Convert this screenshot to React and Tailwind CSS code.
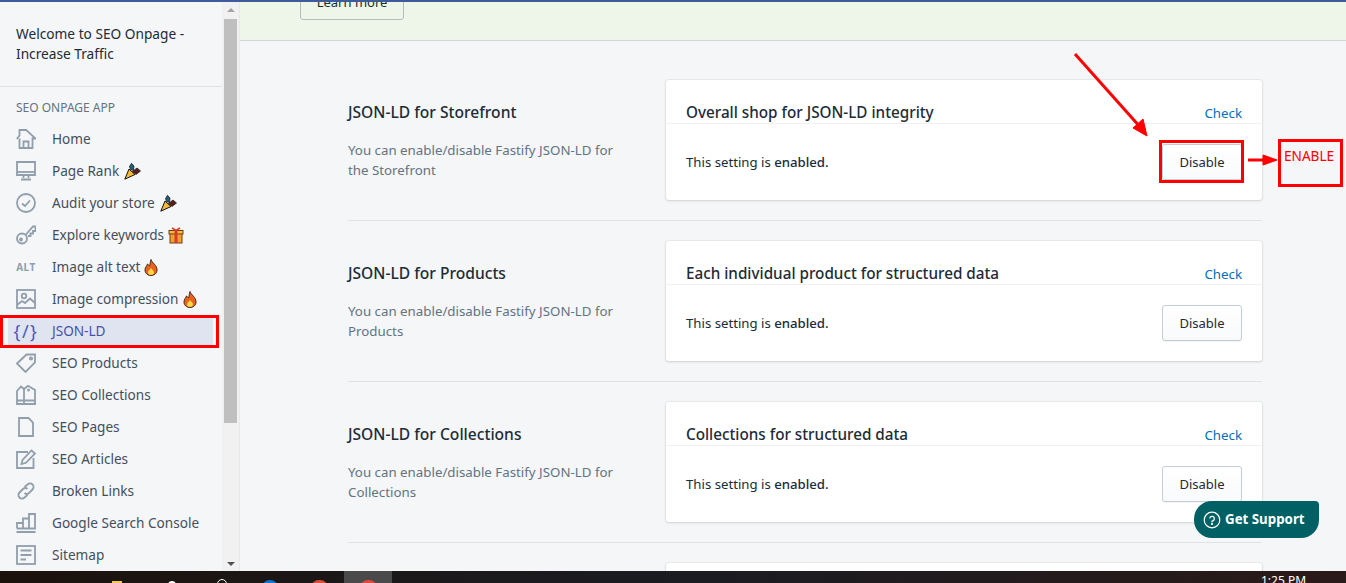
import React from 'react';

const Svg = ({ children }) => (
    <svg width="20" height="20" viewBox="0 0 20 20" fill="none" stroke="#919eab" strokeWidth="1.8" strokeLinejoin="miter">
        {children}
    </svg>
);

const icons = {
    home: <Svg><path d="M.8 10 L3.5 6.5 V1 H8 L10 .8 L19.5 9.5 L16.5 9.5 V19 H3.5 V9.5" /><path d="M7.5 19 V12.5 H12.5 V19" /></Svg>,
    rank: <Svg><path d="M1 1 H19 V14 H1 Z" /><path d="M1 11 H19" /><path d="M7.5 14 V17 M12.5 14 V17" /><path d="M5 18.5 H15" strokeWidth="2" /></Svg>,
    audit: <Svg><circle cx="10" cy="10" r="9" /><path d="M6 10.5 L9 13 L14 7.5" /></Svg>,
    key: <Svg><circle cx="6" cy="13.5" r="5" /><circle cx="5" cy="14.5" r="1" /><path d="M9.5 10 L17 1.5 H19.5 V6 H17 V8.5 H14.5 V11 H12" /></Svg>,
    image: <Svg><rect x="1" y="1" width="18" height="18" /><circle cx="8" cy="7" r="2.3" /><path d="M1 16 L6 12 L9 14 L14 9.5 L19 14" /></Svg>,
    tag: <Svg><path d="M1 10.5 L10.5 1.5 H19 V9.5 L9.5 19 Z" /><circle cx="15" cy="5.5" r="1.2" /></Svg>,
    collection: <Svg><path d="M1 19 V6 L5 1.5 L8 4 L12 .8 L19 5 V19 Z" /><path d="M1 15.5 H19 M8 4 V19" /><circle cx="12.5" cy="5" r=".6" /></Svg>,
    page: <Svg><path d="M3 1 H12.5 L17 5.5 V19 H3 Z" /></Svg>,
    article: <Svg><path d="M12 3 H1 V19 H17.5 V9" /><path d="M5.5 15 L6.5 11 L15.5 1.5 L19 4.5 L10 13.8 Z" /></Svg>,
    link: <Svg><path d="M8.5 6 L11.5 3.5 A3.4 3.4 0 0 1 16.5 8.5 L13 12 A3.4 3.4 0 0 1 8.5 12" /><path d="M11.5 14 L8.5 16.5 A3.4 3.4 0 0 1 3.5 11.5 L7 8 A3.4 3.4 0 0 1 11.5 8" /></Svg>,
    chart: <Svg><path d="M.5 19 H19.5" strokeWidth="2" /><path d="M1 15.5 V10 H7 V15.5 M7 15.5 V5.5 H13 V15.5 M13 15.5 V1 H19 V15.5 H1" /></Svg>,
    sitemap: <Svg><rect x="1" y="1" width="18" height="18" /><path d="M4.5 5.5 H15.5 M4.5 10 H15.5 M4.5 14.5 H10" /></Svg>,
};

const Popper = () => (
    <svg width="17" height="17" viewBox="0 0 17 17" className="ml-[5px] shrink-0">
        <path d="M.8 16.2 L5 6 L11 11.5 Z" fill="#f5b93a" stroke="#111" strokeWidth="1" />
        <path d="M5.5 3.5 L7.5 .3 L10 3 L9.5 7.5 L6.5 6.5 Z" fill="#1f5f7a" stroke="#111" strokeWidth=".7" />
        <path d="M8.5 8.5 L13 5 L16.5 8 L12 11.5 Z" fill="#5e1c18" stroke="#111" strokeWidth=".7" />
    </svg>
);

const Gift = () => (
    <svg width="16" height="17" viewBox="0 0 16 17" className="ml-1 shrink-0">
        <rect x="2" y="6" width="12" height="10" fill="#f0a030" stroke="#7a3a10" strokeWidth="1" />
        <rect x="1" y="3.5" width="14" height="3.5" fill="#f5b93a" stroke="#7a3a10" strokeWidth="1" />
        <rect x="6.5" y="3.5" width="3" height="12.5" fill="#d63b2a" />
        <path d="M8 3.5 L4 .8 M8 3.5 L12 .8" stroke="#d63b2a" strokeWidth="1.6" />
    </svg>
);

const Fire = () => (
    <svg width="14" height="17" viewBox="0 0 14 17" className="ml-1 shrink-0">
        <path d="M7 .5 C8 4 13 6 13 11 C13 14.5 10 16.5 7 16.5 C4 16.5 1 14.5 1 11 C1 8 3 7 3.5 5 C5 6 5.5 7 5.5 7 C6.5 5 6 3 7 .5 Z" fill="#e8641c" stroke="#3a1a08" strokeWidth=".9" />
        <path d="M7 9 C8 11 10 11.5 10 13.5 C10 15 8.5 16 7 16 C5.5 16 4 15 4 13.5 C4 11.5 6 11 7 9 Z" fill="#ffd84a" />
    </svg>
);

const navItems = [
    { label: 'Home', icon: icons.home },
    { label: 'Page Rank', icon: icons.rank, extra: <Popper /> },
    { label: 'Audit your store', icon: icons.audit, extra: <Popper /> },
    { label: 'Explore keywords', icon: icons.key, extra: <Gift /> },
    { label: 'Image alt text', alt: true, extra: <Fire /> },
    { label: 'Image compression', icon: icons.image, extra: <Fire /> },
    { label: 'JSON-LD', active: true },
    { label: 'SEO Products', icon: icons.tag },
    { label: 'SEO Collections', icon: icons.collection },
    { label: 'SEO Pages', icon: icons.page },
    { label: 'SEO Articles', icon: icons.article },
    { label: 'Broken Links', icon: icons.link },
    { label: 'Google Search Console', icon: icons.chart },
    { label: 'Sitemap', icon: icons.sitemap },
];

const sections = [
    { title: 'JSON-LD for Storefront', desc: 'the Storefront', card: 'Overall shop for JSON-LD integrity' },
    { title: 'JSON-LD for Products', desc: 'Products', card: 'Each individual product for structured data' },
    { title: 'JSON-LD for Collections', desc: 'Collections', card: 'Collections for structured data' },
];

const NavRow = ({ item }) => (
    <div className={`flex items-center h-8 text-[13.6px] ${item.active ? 'ml-2 mr-[9px] pl-2 bg-[#e0e4f0] text-[#4353a8]' : 'pl-4 text-[#454f5b]'}`}>
        <div className="flex items-center justify-center shrink-0 h-5 w-5 mr-4">
            {item.active && <span className="text-[18px] text-[#4959bd] whitespace-nowrap tracking-[1.5px]">{'{/}'}</span>}
            {item.alt && <span className="text-[10px] font-bold text-[#919eab] tracking-[0.5px]">ALT</span>}
            {item.icon}
        </div>
        <span className="whitespace-nowrap">{item.label}</span>
        {item.extra}
    </div>
);

const Section = ({ s, last }) => (
    <div className={`flex ${last ? 'pt-5' : 'py-5 border-b border-[#dfe3e8] h-[161px]'}`}>
        <div className="w-[318px] shrink-0 pt-[22px]">
            <div className="text-[15.6px] leading-5 font-medium text-[#212b36]">{s.title}</div>
            {s.desc && (
                <div className="mt-[18px] text-[13.3px] leading-5 text-[#637381] w-[280px]">
                    You can enable/disable Fastify JSON-LD for {s.desc}
                </div>
            )}
        </div>
        <div className="w-[596px] h-[120px] shrink-0 bg-white rounded-[3px] shadow-[0_0_0_1px_rgba(63,63,68,0.05),0_1px_3px_0_rgba(63,63,68,0.15)]">
            {s.card && (
                <>
                    <div className="flex items-end justify-between h-[44px] px-5 border-b border-[#f0f1f3]">
                        <span className="mb-[1px] text-[15.25px] leading-5 font-medium text-[#212b36]">{s.card}</span>
                        <span className="text-[13.3px] leading-5 text-[#006fbb]">Check</span>
                    </div>
                    <div className="flex items-center justify-between h-[75px] px-5">
                        <span className="mt-[2px] text-[13.2px] text-[#212b36]">This setting is <span className="font-medium">enabled.</span></span>
                        <button className="w-[80px] h-[36px] pt-[2px] text-[13px] text-[#212b36] rounded-[3px] border border-[#c4cdd5] bg-gradient-to-b from-white to-[#f9fafb] shadow-[0_1px_0_0_rgba(22,29,37,0.05)]">
                            Disable
                        </button>
                    </div>
                </>
            )}
        </div>
    </div>
);

const Taskbar = () => (
    <div className="relative h-3 shrink-0 overflow-hidden bg-gradient-to-r from-[#1c120c] via-[#1a1c22] to-[#2a1a18]">
        <div className="absolute left-[344px] top-0 w-[48px] h-3 bg-[#4a4a4a]" />
        <div className="absolute left-[112px] top-[10px] w-[10px] h-3 bg-[#f2c94c]" />
        <div className="absolute left-[168px] top-[10px] w-[8px] h-3 rounded-full bg-white" />
        <div className="absolute left-[217px] top-[8px] w-[10px] h-3 rounded-full border border-white" />
        <div className="absolute left-[262px] top-[9px] w-[16px] h-4 rounded-full bg-[#0a78d4]" />
        <div className="absolute left-[311px] top-[9px] w-[17px] h-4 rounded-full bg-[#e04a3a]" />
        <div className="absolute left-[360px] top-[9px] w-[17px] h-4 rounded-full bg-[#e04a3a]" />
        <div className="absolute left-[1261px] top-[2px] text-[12px] leading-4 text-white">1:25 PM</div>
    </div>
);

export default function App() {
    return (
        <div className="relative flex flex-col h-[583px] w-[1346px] overflow-hidden bg-[#f4f6f8] font-['Noto_Sans','Open_Sans',sans-serif]">
            <div className="h-[2px] shrink-0 bg-[#3f5b9b]" />
            <div className="flex flex-1 min-h-0">
                <aside className="flex w-[240px] shrink-0 border-r border-[#e6e8eb] overflow-hidden">
                    <div className="w-[222px] shrink-0">
                        <div className="h-[85px] px-4 pt-[22px] border-b border-[#dfe3e8] text-[13.7px] leading-5 text-[#212b36]">
                            Welcome to SEO Onpage - Increase Traffic
                        </div>
                        <div className="px-4 pt-[13px] h-[36px] text-[12px] leading-4 text-[#637381]">SEO ONPAGE APP</div>
                        {navItems.map((item) => <NavRow key={item.label} item={item} />)}
                    </div>
                    <div className="flex flex-col items-center w-[17px] shrink-0 bg-[#f1f1f1]">
                        <div className="h-[17px] pt-[6px]">
                            <div className="w-0 h-0 border-x-[4px] border-x-transparent border-b-[4px] border-b-[#a3a3a3]" />
                        </div>
                        <div className="w-[13px] h-[404px] bg-[#bfbfbf]" />
                        <div className="flex-1" />
                        <div className="h-[14px] pt-[5px]">
                            <div className="w-0 h-0 border-x-[4px] border-x-transparent border-t-[4px] border-t-[#505050]" />
                        </div>
                    </div>
                </aside>
                <main className="flex-1 min-w-0 overflow-hidden">
                    <div className="flex flex-col justify-end h-[39px] pb-5 pl-[60px] bg-[#eef6ea] border-b border-[#d5d8d6] shrink-0">
                        <button className="w-[104px] h-[36px] pt-[2px] shrink-0 rounded-[3px] border border-[#b9bdb9] text-[13px] text-[#212b36]">Learn more</button>
                    </div>
                    <div className="pl-[108px] pr-[84px] pt-[19px]">
                        {sections.map((s) => <Section key={s.title} s={s} />)}
                        <Section s={{ title: '' }} last />
                    </div>
                </main>
            </div>
            <Taskbar />

            {/* annotations drawn on top of the screenshot */}
            <div className="absolute left-0 top-[315px] w-[219px] h-[33px] border-[3px] border-[#ff0000]" />
            <div className="absolute left-[1159px] top-[140px] w-[85px] h-[43px] border-[3px] border-[#ff0000]" />
            <div className="absolute left-[1278px] top-[139px] w-[65px] h-[48px] border-[3px] border-[#ff0000] pl-[3px] pt-[4px] text-[13.6px] leading-5 text-[#ff0000]">ENABLE</div>
            <svg className="absolute left-0 top-0 pointer-events-none" width="1346" height="583">
                <path d="M1075 54 L1141 128" stroke="#ff0000" strokeWidth="3" />
                <path d="M1147 136 L1133 128 L1143 119 Z" fill="#ff0000" stroke="#ff0000" />
                <path d="M1248 160 L1266 160" stroke="#ff0000" strokeWidth="3" />
                <path d="M1277 160 L1263 155 L1263 165 Z" fill="#ff0000" stroke="#ff0000" />
            </svg>
            <div className="absolute left-[1194px] top-[501px] flex items-center w-[125px] h-[37px] pl-[9px] rounded-tl-[18px] rounded-bl-[18px] rounded-br-[18px] rounded-tr-[4px] bg-[#006064] text-white text-[13.3px] font-bold">
                <svg width="18" height="18" viewBox="0 0 18 18" fill="none" stroke="white" strokeWidth="1.2" className="mr-[4px] shrink-0">
                    <circle cx="9" cy="9" r="7.8" />
                    <path d="M6.8 7 A2.3 2.3 0 1 1 9 10 V11" strokeLinecap="round" />
                    <circle cx="9" cy="13" r=".5" fill="white" />
                </svg>
                <span className="whitespace-nowrap">Get Support</span>
            </div>
        </div>
    );
}
